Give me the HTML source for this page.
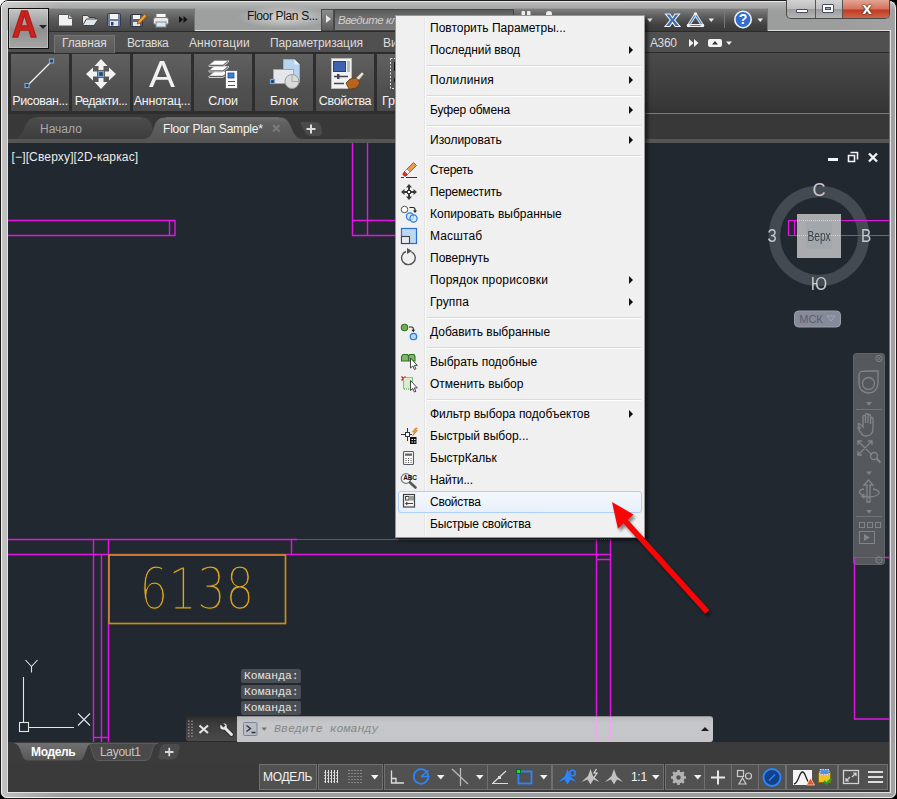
<!DOCTYPE html>
<html lang="ru">
<head>
<meta charset="utf-8">
<title>Floor Plan Sample</title>
<style>
*{box-sizing:border-box;margin:0;padding:0}
html,body{width:897px;height:799px;overflow:hidden;background:#000}
body{font-family:"Liberation Sans",sans-serif;font-size:12px;position:relative}
div,span,svg{position:absolute}
svg{overflow:visible}
#frame{left:0;top:0;width:897px;height:799px;border-radius:8px 8px 7px 7px;
 background:linear-gradient(90deg,#c4c4c4 0,#bcbcbc 8px,#9e9f9f 60px,#9c9d9d 840px,#a2a2a2 100%);
 border:1px solid #1c1c1c}
#frame i{position:absolute;left:0;top:0;right:0;bottom:0;border:1px solid rgba(255,255,255,.8);border-radius:7px 7px 6px 6px}
#app{left:7px;top:30px;width:884px;height:763px;background:#3a3a3a;overflow:hidden;border:1px solid rgba(255,255,255,.85)}
#appin{left:8px;top:31px;width:882px;height:761px;background:#3a3a3a;border-top:1px solid #2a2a2a}
#draw{left:8px;top:143px;width:882px;height:599px;background:#212830;overflow:hidden}
#tabs{left:8px;top:31px;width:882px;height:22px;background:#505050}
.rt{top:35px;height:18px;line-height:17px;color:#dcdcdc;font-size:12px;white-space:nowrap}
#panel{left:8px;top:53px;width:882px;height:61px;background:linear-gradient(#4b4b4b,#343434);border-bottom:1px solid #7a7a7a;border-right:1px solid #6a6a6a}
.rb{top:54px;width:58px;height:57px;background:linear-gradient(#616161,#505050 60%,#4b4b4b);color:#f4f4f4;font-size:12.5px;text-align:center;white-space:nowrap;overflow:hidden}
.rb span{left:0;right:0;top:40px;line-height:14px}
#menu{left:395px;top:15px;width:250px;height:523px;background:#f0f0f0;border:1px solid #979797;box-shadow:3px 3px 3px rgba(0,0,0,.5)}
.mi{left:34px;height:22px;line-height:22px;font-size:12px;color:#000;white-space:nowrap}
.sep{left:31px;width:214px;height:2px;border-top:1px solid #d9d9d9;border-bottom:1px solid #fff}
.arr{left:233px;width:0;height:0;border-left:4px solid #111;border-top:4px solid transparent;border-bottom:4px solid transparent}
.cmdh{left:241px;width:60px;height:14.5px;background:#4b4f54;border-radius:2px;color:#e4e4e4;font-family:'Liberation Mono',monospace;font-size:11.4px;line-height:14.5px;padding-left:3px;white-space:nowrap}
.sg{top:764px;height:26px;border:1px solid #707070;background:#515151}
.hl{left:2px;width:244px;height:22px;border:1px solid #aecff7;border-radius:3px;background:linear-gradient(#f4f8fc,#e8f0fb)}
</style>
</head>
<body>
<div style="left:0;top:0;width:12px;height:12px;background:#fff"></div><div id="frame"><i></i></div>
<div id="app"></div><div id="appin"></div>
<!-- title bar -->
<div style="left:2px;top:2px;width:893px;height:9px;background:linear-gradient(rgba(255,255,255,.28),rgba(255,255,255,0))"></div>
<div id="qat" style="left:48px;top:8px;width:147px;height:23px;background:linear-gradient(#7c7c7c,#5c5c5c 45%,#464646);border-top:1px solid #999;border-right:1px solid #777"></div>
<svg style="left:56px;top:11px" width="136" height="18" viewBox="0 0 136 18">
 <!-- new -->
 <path d="M2.5 3.5h10l4 4v7.5h-14z" fill="#f2f2f2" stroke="#555" stroke-width="1"/>
 <path d="M12.5 3.5v4h4" fill="#d0d0d0" stroke="#666" stroke-width="1"/>
 <!-- open -->
 <path d="M26.5 14.5v-10h5l1.5 2h6v2.5" fill="#e8e8e8" stroke="#444"/>
 <path d="M26.5 14.5l4-6.5h12l-4.5 6.5z" fill="#dfe6ec" stroke="#444"/>
 <!-- save -->
 <rect x="51.500" y="2.500" width="13" height="13" rx="1" fill="#6f7fa0" stroke="#333c55"/>
 <rect x="54" y="3" width="8" height="5" fill="#f4f4f4"/>
 <rect x="54" y="10" width="8" height="5" fill="#e4e4e4"/><rect x="55" y="11" width="2.500" height="3.500" fill="#3a4560"/>
 <!-- saveas -->
 <rect x="74.500" y="3.500" width="12" height="12" rx="1" fill="#5b6477" stroke="#2e3442"/>
 <rect x="77" y="4" width="7" height="4" fill="#f4f4f4"/><rect x="77" y="11" width="7" height="4" fill="#e4e4e4"/>
 <path d="M82 10l6.500-7 2.500 2-6.500 7-3 1z" fill="#f0a030" stroke="#7a4a10" stroke-width=".8"/>
 <!-- print -->
 <rect x="100" y="2.500" width="10" height="5" fill="#fafafa" stroke="#777"/>
 <rect x="97.500" y="6.500" width="15" height="7" rx="2" fill="#e9e9e9" stroke="#777"/>
 <rect x="100" y="11" width="10" height="5" fill="#d8e8f8" stroke="#888"/>
 <!-- more -->
 <path d="M123 5l4 3.500-4 3.500zM127.500 5l4 3.500-4 3.500z" fill="#111"/>
</svg>
<div style="left:238px;top:6px;width:92px;height:22px;background:radial-gradient(ellipse at center,rgba(255,255,255,.6),rgba(255,255,255,0) 72%)"></div>
<div style="left:247px;top:8px;font-size:12px;line-height:16px;color:#141414;white-space:nowrap;letter-spacing:-.35px">Floor Plan S...</div>
<!-- search -->
<div style="left:321px;top:9px;width:13px;height:22px;background:linear-gradient(#8c8c8c,#5c5c5c);border:1px solid #4a4a4a"></div>
<div style="left:326px;top:15px;width:0;height:0;border-left:5px solid #e8e8e8;border-top:4.500px solid transparent;border-bottom:4.500px solid transparent"></div>
<div style="left:334px;top:9px;width:180px;height:22px;background:linear-gradient(#5a5a5a,#747474 50%,#7c7c7c);border:1px solid #444;color:#cfcfcf;font-style:italic;font-size:11.500px;letter-spacing:-.45px;line-height:20px;padding-left:3px;white-space:nowrap;overflow:hidden">Введите ключевое слово/фразу</div>
<div style="left:514px;top:8px;width:254px;height:23px;background:linear-gradient(#7e7e7e,#5c5c5c 35%,#424242 70%,#3a3a3a);border-top:1px solid #999;border-right:1px solid #777"></div>
<svg style="left:518px;top:8px" width="60" height="23" viewBox="518 8 60 23"><rect x="521.500" y="11" width="3.500" height="9" rx="1" fill="#eee"/><rect x="527" y="11" width="3.500" height="9" rx="1" fill="#eee"/><circle cx="549" cy="14" r="3" fill="#eee"/></svg>
<svg style="left:640px;top:8px" width="130" height="23" viewBox="0 0 130 23">
 <path d="M7 10.500h5.500l-2.750 3.500z" fill="#eee"/>
 <path d="M25.500 6h4.500l2.500 3.800 2.500-3.800h4.500l-4.800 6 5.300 6.500h-4.800l-2.700-4-2.700 4h-4.800l5.300-6.500z" fill="#3a6fb5" stroke="#eef2f8" stroke-width="1.100"/>
 <path d="M55.500 6.500l7 11h-14z" fill="none" stroke="#f0f0f0" stroke-width="3" stroke-linejoin="round"/>
 <path d="M55.500 6.500l7 11h-14z" fill="none" stroke="#3f7fd0" stroke-width="1.200" stroke-linejoin="round"/>
 <circle cx="55.500" cy="6" r="1.800" fill="#f0f0f0"/><circle cx="48.500" cy="17.500" r="1.800" fill="#f0f0f0"/><circle cx="62.500" cy="17.500" r="1.800" fill="#f0f0f0"/>
 <path d="M68.500 10.500h5.500l-2.750 3.500z" fill="#eee"/>
 <path d="M84.500 3v17" stroke="#777"/>
 <circle cx="103" cy="11.500" r="8.200" fill="#2f6fd0" stroke="#f4f4f4" stroke-width="1.600"/>
 <path d="M117.500 10.500h5.500l-2.750 3.500z" fill="#eee"/>
</svg>
<div style="left:737px;top:11px;width:12px;text-align:center;font-size:14px;line-height:17px;font-weight:bold;color:#fff">?</div>
<!-- window buttons -->
<div style="left:786px;top:0;width:104px;height:19px;border:1px solid #4a4a4a;border-top:none;border-radius:0 0 5px 5px;overflow:hidden;background:linear-gradient(#d2d2d2,#bdbdbd 48%,#9c9c9c 52%,#b5b5b5)">
 <div style="left:28px;top:0;width:1px;height:19px;background:#555"></div>
 <div style="left:55px;top:0;width:1px;height:19px;background:#555"></div>
 <div style="left:56px;top:0;width:48px;height:19px;background:linear-gradient(#e3a595,#d5705b 48%,#c03a22 52%,#cf6a4e)"></div>
 <div style="left:9px;top:9px;width:12px;height:4px;background:#fff;border:1px solid #444a66;border-radius:1px"></div>
 <div style="left:35px;top:4px;width:12px;height:9px;background:#fff;border:1px solid #444a66;border-radius:1px"></div>
 <div style="left:38px;top:7px;width:6px;height:3px;background:#aaa;border:1px solid #444a66"></div>
 <div style="left:71px;top:-1px;width:18px;font-size:17px;line-height:19px;font-weight:bold;color:#fff;text-shadow:0 0 1px #333,0 0 1px #333,0 0 2px #333;text-align:center">x</div>
</div>
<!-- ribbon tabs -->
<div id="tabs" style="border-top:1px solid #2b2b2b;border-bottom:1px solid #2b2b2b"></div>
<div style="left:54px;top:35px;width:61px;height:18px;background:linear-gradient(#666,#5a5a5a);border:1px solid #757575;border-bottom:none"></div>
<div class="rt" style="left:62px;letter-spacing:-.15px">Главная</div>
<div class="rt" style="left:127px;letter-spacing:-.5px">Вставка</div>
<div class="rt" style="left:189px;letter-spacing:.1px">Аннотации</div>
<div class="rt" style="left:270px;letter-spacing:-.1px">Параметризация</div>
<div class="rt" style="left:383px">Вид</div>
<div class="rt" style="left:650px;letter-spacing:-.4px">A360</div>
<svg style="left:686px;top:36px" width="50" height="14" viewBox="0 0 50 14">
 <path d="M3 3l4.500 4-4.500 4zM8 3l4.500 4-4.500 4z" fill="#f4f4f4"/>
 <rect x="22" y="3" width="14" height="8" rx="2" fill="#f4f4f4"/><path d="M26 8.500h6l-3-3.500z" fill="#333"/>
 <path d="M40 5.500h6l-3 3.500z" fill="#f0f0f0"/>
</svg>
<div id="appbtn" style="left:8px;top:8px;width:41px;height:41px;background:linear-gradient(#c6c6c6,#909090 55%,#a6a6a6);border:1px solid #111;box-shadow:inset 0 0 0 1px rgba(255,255,255,.25)"></div>
<div style="left:12px;top:5px;width:30px;height:38px;font-size:37.500px;line-height:38px;font-weight:bold;color:#c8231f;-webkit-text-stroke:1.300px #b81c18;text-shadow:0 0 1px #7a0e0c;transform:scaleX(.92);transform-origin:0 0">A</div>
<div style="left:39px;top:25px;border-top:4px solid #1e2430;border-left:4px solid transparent;border-right:4px solid transparent;width:0;height:0"></div>
<!-- ribbon panel -->
<div id="panel"></div>
<div style="left:8px;top:53px;width:440px;height:61px;background:#2e2e2e"></div>
<div class="rb" style="left:11px"><span style="letter-spacing:-.4px">Рисован...</span></div>
<div class="rb" style="left:72px"><span style="letter-spacing:-.5px">Редакти...</span></div>
<div class="rb" style="left:133px"><span style="letter-spacing:-.25px">Аннотац...</span></div>
<div class="rb" style="left:194px"><span style="letter-spacing:-.2px">Слои</span></div>
<div class="rb" style="left:255px"><span>Блок</span></div>
<div class="rb" style="left:316px"><span style="letter-spacing:-.3px">Свойства</span></div>
<div class="rb" style="left:377px"><span style="text-align:left;left:5px">Группы</span></div>
<svg style="left:10px;top:54px" width="385" height="40" viewBox="0 0 385 40">
 <!-- draw: line -->
 <path d="M17.500 31.500l24-24" stroke="#f0f0f0" stroke-width="1.300"/>
 <rect x="15" y="29.500" width="4" height="4" fill="#3a3a3a" stroke="#6aa7f0" stroke-width="1.200"/>
 <rect x="39.500" y="5" width="4" height="4" fill="#3a3a3a" stroke="#6aa7f0" stroke-width="1.200"/>
 <!-- modify: move arrows -->
 <g transform="translate(91,20)" fill="#f2f2f2">
  <path d="M0 -15l6.500 7h-4v4h-5v-4h-4z"/>
  <path d="M0 15l6.500-7h-4v-4h-5v4h-4z"/>
  <path d="M-15 0l7-6.500v4h4v5h-4v4z"/>
  <path d="M15 0l-7-6.500v4h-4v5h4v4z"/>
  <rect x="-2.500" y="-2.500" width="5" height="5" fill="#444" stroke="#6aa7f0" stroke-width="1.300"/>
 </g>
 <!-- layers -->
 <g transform="translate(184,0)">
  <path d="M15 22l5.500-4.500h14l-5.500 4.500z" fill="#fff" stroke="#777" stroke-width=".6"/>
  <path d="M15 16.500l5.500-4.500h14l-5.500 4.500z" fill="#fff" stroke="#777" stroke-width=".6"/>
  <path d="M15 11l5.500-4.500h14l-5.500 4.500z" fill="#fff" stroke="#777" stroke-width=".6"/>
  <path d="M15 11v1.500l14 0 5.500-4.500v-1.500M15 16.500v1.500h14l5.500-4.500v-1.500M15 22v1.500h14l5.500-4.500v-1.500" fill="none" stroke="#ccc" stroke-width="1"/>
  <rect x="31.500" y="16.500" width="12" height="18" fill="#fafafa" stroke="#666"/>
  <rect x="34" y="19" width="6" height="5" fill="#3e7fd0" stroke="#1f4f9a" stroke-width=".8"/>
  <path d="M34 27.500h7M34 31.500h7" stroke="#555" stroke-width="1"/>
 </g>
 <!-- block -->
 <g transform="translate(245,0)">
  <path d="M28.500 5.500h11l5 5v18h-16z" fill="#b7d4ee" stroke="#8fb3d6"/>
  <path d="M39.500 5.500v5h5z" fill="#e6f0fa"/>
  <rect x="18.500" y="15.500" width="20" height="14" fill="#e4e6ea" stroke="#9aa"/>
  <circle cx="37" cy="27.500" r="7" fill="#d8dadc" stroke="#999"/>
  <path d="M37 20.500v7h7" stroke="#aaa" fill="none"/>
  <rect x="15.500" y="25.500" width="4" height="4" fill="#3a3a3a" stroke="#6aa7f0" stroke-width="1.200"/>
 </g>
 <!-- properties -->
 <g transform="translate(306,0)">
  <rect x="15.500" y="4.500" width="20" height="30" fill="#f2f2f2" stroke="#bbb"/>
  <rect x="17.500" y="7.500" width="12" height="10" fill="#3d62b0" stroke="#24407e"/>
  <rect x="31" y="7" width="3" height="11" fill="#bbb"/>
  <path d="M18 22.500h14M18 29.500h10" stroke="#445" stroke-width="1.300"/>
  <rect x="21" y="20" width="2.500" height="5" fill="#445"/>
  <path d="M30 29l4-4 7-1 3 5-4 5-7 1z" fill="#b5651d" stroke="#6b3a10" stroke-width=".8"/>
  <path d="M40 24l6-6 2 2-5 6z" fill="#e8e0d0" stroke="#666" stroke-width=".6"/>
 </g>
 <!-- groups -->
 <g transform="translate(368,0)">
  <rect x="12.500" y="4.500" width="20" height="30" fill="none" stroke="#ddd" stroke-dasharray="2 1.500"/>
  <rect x="16" y="8" width="12" height="9" fill="#111"/><circle cx="21" cy="26" r="5" fill="#111"/>
 </g>
</svg>
<div style="left:145px;top:57px;width:34px;font-size:36px;line-height:36px;color:#f2f2f2;text-align:center;transform:scaleX(1.080)">A</div>
<!-- strip under ribbon + file tabs -->
<div style="left:8px;top:114px;width:882px;height:29px;background:#383838"></div>
<div style="left:8px;top:139px;width:882px;height:4px;background:#555"></div>
<svg style="left:8px;top:114px" width="340" height="29" viewBox="8 114 340 29">
 <defs><linearGradient id="tg1" x1="0" y1="0" x2="0" y2="1"><stop offset="0" stop-color="#4c4c4c"/><stop offset="1" stop-color="#3d3d3d"/></linearGradient>
 <linearGradient id="tg2" x1="0" y1="0" x2="0" y2="1"><stop offset="0" stop-color="#6c6c6c"/><stop offset=".25" stop-color="#606060"/><stop offset="1" stop-color="#555"/></linearGradient></defs>
 <path d="M9 139c11 0 13-5 16-12s5-9.500 12-9.500h104c7 0 9 2.500 11 8.500s4 13 14 13z" fill="url(#tg1)"/>
 <path d="M37 118h104" stroke="#5a5a5a" stroke-width="1"/>
 <path d="M140 139.500c10 0 12-5 14-12s5-10 12-10h113c7 0 9 2.500 12 9.500s5 12.500 14 12.500z" fill="url(#tg2)"/>
 <path d="M166 118h113" stroke="#7c7c7c" stroke-width="1"/>
 <path d="M300 122h14c5 0 7 3 7.500 7l.5 3c0 3-1 4-4 4h-6c-5 0-7-3-9-8z" fill="#4b4b4b"/>
 <path d="M306.500 129h9M311 124.500v9" stroke="#dcdcdc" stroke-width="2"/>
 <path d="M273 125l6.500 6.500M279.500 125l-6.500 6.500" stroke="#7a7a7a" stroke-width="2"/>
</svg>
<div style="left:40px;top:122px;font-size:12px;line-height:15px;color:#aaa">Начало</div>
<div style="left:163px;top:122px;font-size:12px;line-height:15px;color:#f4f4f4;white-space:nowrap;letter-spacing:-.2px">Floor Plan Sample*</div>
<div id="draw">
<svg style="left:0;top:0" width="882" height="599" viewBox="8 143 882 599">
 <g stroke="#e414e4" stroke-width="1.400" fill="none">
  <path d="M352.500 143v92.500h43M367.500 143v92.500M352.500 220.500h43"/>
  <path d="M8 220.500h167v15h-167M169.500 220.500v15"/>
  <path d="M8 539.500h289M8 554.500h603"/>
  <path d="M93.500 539.500v203M101.500 554.500v188M108.500 539.500v203M93.500 737.500h15"/>
  <path d="M291.500 539.500v15"/>
  <path d="M596.500 539.500v203M610.500 539.500v203M596.500 559.500h14"/>
  <path d="M890 557.500h-35.500v161.500h35.500"/>
 </g>
 <path d="M297 539.500h299" stroke="#5a5f66"/>
 <path d="M596 539.500h15" stroke="#e01fe0" stroke-dasharray="1 1"/>
 <rect x="109" y="555" width="176.500" height="68.500" fill="none" stroke="#c98d1c" stroke-width="1.700"/>
</svg>
<svg style="left:0;top:0" width="882" height="599" viewBox="8 143 882 599">
 <text transform="translate(139.500 608.800) scale(.785 1)" font-family="'DejaVu Sans Light','DejaVu Sans',sans-serif" font-weight="200" font-size="57.500" fill="#dba51c" stroke="#212830" stroke-width="1">6138</text>
 <!-- UCS icon -->
 <g stroke="#e6e6e6" stroke-width="1.100" fill="none">
  <path d="M23.500 722v-45M29 727.500h45"/>
  <rect x="19.500" y="722.500" width="9" height="9"/>
  <path d="M25.500 660l6 6.500 6-6.500M31.500 666.500v6"/>
  <path d="M78 713.500l12 12M90 713.500l-12 12"/>
 </g>
</svg>
<div style="left:3.500px;top:7px;font-size:12px;line-height:14px;color:#ececec;white-space:nowrap;letter-spacing:.15px">[−][Сверху][2D-каркас]</div>
</div>
<!-- drawing window controls -->
<svg style="left:826px;top:150px" width="56" height="16" viewBox="0 0 56 16">
 <rect x="2" y="8" width="10" height="3" fill="#f4f4f4"/>
 <path d="M24.500 2.500h7v7M22.500 5.500h6v6h-6z" fill="none" stroke="#f4f4f4" stroke-width="1.600"/>
 <path d="M43 3.500l8 8M51 3.500l-8 8" stroke="#f4f4f4" stroke-width="2.400"/>
</svg>
<!-- viewcube -->
<svg style="left:760px;top:176px" width="130" height="160" viewBox="760 176 130 160">
 <circle cx="819" cy="236" r="44.500" fill="none" stroke="#444a52" stroke-width="11.500"/>
 <path d="M788.500 220.500h101.500M788.500 235.500h101.500M788.500 220.500v15M794.500 220.500v15" stroke="#e414e4" stroke-width="1.200" fill="none"/>
 <rect x="797" y="214" width="44" height="44" fill="#a9abae"/>
 <rect x="806" y="222" width="26" height="27" fill="#a2a7ab"/>
 <path d="M797 220.500h44M797 235.500h44" stroke="#d6d0d8" stroke-dasharray="1 1" fill="none" shape-rendering="crispEdges"/>
 <rect x="794.500" y="311" width="46" height="16" rx="4" fill="#878b99" stroke="#9a9eac" stroke-width="1"/>
 <path d="M827 316h8l-4 5z" fill="none" stroke="#a4a8b6" stroke-width=".9"/>
</svg>
<div style="left:809px;top:179px;width:20px;text-align:center;font-size:18px;line-height:22px;color:#c9c9c9">С</div>
<div style="left:809px;top:273px;width:20px;text-align:center;font-size:18px;line-height:22px;color:#c9c9c9;transform:scaleX(.9)">Ю</div>
<div style="left:762px;top:225px;width:20px;text-align:center;font-size:18px;line-height:22px;color:#c9c9c9;transform:scaleX(.85)">З</div>
<div style="left:856px;top:225px;width:20px;text-align:center;font-size:18px;line-height:22px;color:#c9c9c9;transform:scaleX(.85)">В</div>
<div style="left:799px;top:227px;width:40px;text-align:center;font-size:15.500px;line-height:17px;color:#3e4248;transform:scaleX(.66)">Верх</div>
<div style="left:797px;top:312px;width:28px;text-align:center;font-size:11px;line-height:14px;color:#5a5e6b">МСК</div>
<!-- nav bar -->
<div style="left:853px;top:353px;width:32px;height:212px;border-radius:4px;background:rgba(88,92,96,.94);border:1px solid rgba(110,114,118,.5)"></div>
<svg style="left:853px;top:353px" width="32" height="212" viewBox="853 353 32 212" fill="none" stroke="#80858a" stroke-width="1.300">
 <path d="M854.500 565v-7.500h31" stroke="#c030c8" stroke-width="1" shape-rendering="crispEdges"/>
 <circle cx="879" cy="358.500" r="3.200" stroke-width="1"/><path d="M877.500 357l3 3M880.500 357l-3 3" stroke-width=".9"/>
 <circle cx="879" cy="560" r="3.200" stroke-width="1"/><path d="M877.500 559l1.500 1.500 1.500-1.500" stroke-width=".9"/>
 <path d="M859 375c0-4 2-4 10-4h9v12c0 6-4 10-9.500 10s-9.500-4-9.500-9.500z"/>
 <circle cx="868.500" cy="383.500" r="6"/>
 <path d="M866 402h6l-3 3.500z" fill="#80858a" stroke="none"/>
 <path d="M856 409.500h26M856 516.500h26" stroke="#70747a" stroke-width="1"/>
 <path d="M860 428c-3-4-2-5 0-4l3 3v-10c0-2 2.500-2 2.500 0v6-8c0-2 2.500-2 2.500 0v8-7c0-2 2.500-2 2.500 0v8-5c0-2 2.500-2 2.500 0v9c0 6-3 8-7 8s-5-3-8-8z"/>
 <path d="M858 441l14 14M872 441l-14 14M858 445v-4h4M872 445v-4h-4M858 451v4h4" />
 <circle cx="874" cy="456" r="3.500"/><path d="M876.500 458.500l4 4" stroke-width="2"/>
 <path d="M866 471.500h6l-3 3.500z" fill="#80858a" stroke="none"/>
 <path d="M867 502v-17h-3l4.500-5 4.500 5h-3v17z"/>
 <path d="M864 489c-6 1-6 5 0 6.500M873 489c9 1.500 8 7-3 8l-8-1 2.500-2M862 496l2.500 2.500"/>
 <path d="M866 510h6l-3 3.500z" fill="#80858a" stroke="none"/>
 <rect x="859.500" y="522.500" width="5" height="5" stroke-width="1"/><rect x="867.500" y="522.500" width="5" height="5" stroke-width="1"/><rect x="875.500" y="522.500" width="5" height="5" stroke-width="1"/>
 <rect x="859.500" y="531.500" width="15" height="12" stroke-width="1"/><path d="M864 534l6 3.500-6 3.500z" fill="#80858a" stroke="none"/>
</svg>
<!-- command history -->
<div class="cmdh" style="top:668.500px">Команда:</div>
<div class="cmdh" style="top:684.500px">Команда:</div>
<div class="cmdh" style="top:700.500px">Команда:</div>
<!-- command line -->
<div style="left:185px;top:716px;width:53px;height:26px;background:linear-gradient(#2e2e2e,#3c3c3c 30%,#4a4a4a);border-radius:3px 0 0 3px;border:1px solid #2a2a2a;border-right:none"></div>
<div style="left:237px;top:716px;width:476px;height:26px;background:linear-gradient(#b8babc,#c5c7ca 25%,#c3c5c8);border-top:1px solid #909294;border-radius:0 3px 3px 0"></div>
<svg style="left:185px;top:716px" width="90" height="26" viewBox="185 716 90 26">
 <path d="M188.750 720.500v16.500M192 720.500v16.500" stroke="#8a8a8a" stroke-width="1.500" stroke-dasharray="1.500 1.500"/>
 <path d="M199.500 725.500l8.500 7.500M208 725.500l-8.500 7.500" stroke="#e4e4e4" stroke-width="2.100"/>
 <path d="M225 728l6.500 6.500" stroke="#2a2a2a" stroke-width="4.600" stroke-linecap="round"/>
 <circle cx="223.500" cy="726.500" r="4" fill="#2a2a2a"/>
 <path d="M225 728l6.500 6.500" stroke="#e6e6e6" stroke-width="3" stroke-linecap="round"/>
 <circle cx="223.500" cy="726.500" r="3.300" fill="#e6e6e6"/>
 <path d="M220 720l5.500 5.500-2 2-5.500-5.500z" fill="#363636"/>
 <rect x="243.500" y="722.500" width="13.500" height="13" rx="1" fill="#b9bdc6" stroke="#7d8496"/>
 <path d="M246.500 725.500l4 3-4 3M251.500 732.500h4" stroke="#2a2e38" stroke-width="1.300" fill="none"/>
 <path d="M261.500 727.500h5.500l-2.750 3.200z" fill="#707070"/>
</svg>
<div style="left:274px;top:721px;font-family:'Liberation Mono',monospace;font-style:italic;font-size:11.600px;line-height:15px;color:#868686;white-space:nowrap">Введите команду</div>
<div style="left:701px;top:727px;width:0;height:0;border-bottom:4.500px solid #1c1c1c;border-left:4px solid transparent;border-right:4px solid transparent"></div>
<svg style="left:590px;top:716px" width="30" height="27" viewBox="590 716 30 27"><path d="M596.500 717v25M610.500 717v25M596.500 741.500h14" stroke="#f2a6f2" stroke-width="1.200" fill="none"/><path d="M596.500 737.500h14" stroke="#f2a6f2" stroke-width="1" stroke-dasharray="1 1" fill="none"/></svg>
<!-- layout tabs -->
<div style="left:8px;top:742px;width:882px;height:22px;background:#3b3b3b"></div>
<svg style="left:8px;top:742px" width="200" height="20" viewBox="8 742 200 20">
 <defs><linearGradient id="lg1" x1="0" y1="0" x2="0" y2="1"><stop offset="0" stop-color="#707070"/><stop offset="1" stop-color="#575757"/></linearGradient></defs>
 <path d="M86 743.500c3 0 4 1.500 5 4.500l2.500 8c1 3 2.500 4.500 5.500 4.500h46c3 0 4.500-1.500 5.500-4.500l2.500-8c1-3 2-4.500 5-4.500z" fill="#4a4a4a" stroke="#5c5c5c"/>
 <path d="M12 743c4 0 6 1.500 7.500 5l3 8c1.500 3.500 3 4.500 6 4.500h50c3 0 4.500-1.500 5.500-4.500l3-8c1.500-3.500 3-5 6-5z" fill="url(#lg1)"/>
 <path d="M166 744h11c2 0 3 1 2.500 3.500l-1.500 7c-1 3.500-3 5-6 5h-11c-2 0-3-1-2.500-3.500l1.500-7c1-3.500 3-5 6-5z" fill="#4b4b4b"/>
 <path d="M165 752h8.500M169.250 747.750v8.500" stroke="#d8d8d8" stroke-width="1.800"/>
</svg>
<div style="left:31px;top:745px;font-size:12px;line-height:15px;font-weight:bold;color:#fff;white-space:nowrap;letter-spacing:-.35px">Модель</div>
<div style="left:100px;top:745px;font-size:12px;line-height:15px;color:#c4c4c4;white-space:nowrap;letter-spacing:-.3px">Layout1</div>
<!-- status bar -->
<div style="left:8px;top:763px;width:882px;height:29px;background:#3a3a3a"></div>
<div class="sg" style="left:259px;width:58px"></div>
<div class="sg" style="left:318px;width:65px"></div>
<div class="sg" style="left:384px;width:104px"></div>
<div class="sg" style="left:487px;width:65px"></div>
<div class="sg" style="left:552px;width:112px"></div>
<div class="sg" style="left:665px;width:40px"></div>
<div class="sg" style="left:704px;width:28px"></div>
<div class="sg" style="left:731px;width:28px"></div>
<div class="sg" style="left:758px;width:28px"></div>
<div class="sg" style="left:786px;width:52px"></div>
<div class="sg" style="left:838px;width:50px"></div>
<div style="left:263px;top:770px;font-size:12px;line-height:15px;color:#f4f4f4;letter-spacing:-.3px">МОДЕЛЬ</div>
<div style="left:631px;top:770px;font-size:12px;line-height:15px;color:#f4f4f4;letter-spacing:-.3px">1:1</div>
<svg style="left:318px;top:764px" width="571" height="26" viewBox="318 764 571 26" fill="none">
 <!-- grid -->
 <path d="M325.500 770v13M328.500 770v13M331.500 770v13M334.500 770v13M337.500 770v13" stroke="#e0e0e0" stroke-width="1"/>
 <path d="M324 772.500h15M324 775.500h15M324 778.500h15M324 781.500h15" stroke="#bbb" stroke-width="1" stroke-dasharray="1 2"/>
 <!-- snap dots -->
 <path d="M348.500 770.500h14M348.500 773.500h14M348.500 776.500h14M348.500 779.500h14M348.500 782.500h14" stroke="#bdbdbd" stroke-width="1" stroke-dasharray="1 2"/>
 <path d="M371 775h7.500l-3.750 4.500z" fill="#f2f2f2"/>
 <!-- ortho -->
 <path d="M391.500 770.500v12.500h12.500M391.500 778.500h4.500v4.500" stroke="#ddd" stroke-width="1.300"/>
 <!-- polar -->
 <circle cx="421" cy="776.500" r="7.300" stroke="#2a86ff" stroke-width="1.800"/>
 <path d="M421 776.500h8.500M421 776.500l7.500-6" stroke="#2a86ff" stroke-width="1.500"/>
 <path d="M437 775h7.500l-3.750 4.500z" fill="#f2f2f2"/>
 <!-- isodraft -->
 <path d="M460.500 768v18M452 769l16 15" stroke="#b8b8b8" stroke-width="1.300"/>
 <path d="M476 775h7.500l-3.750 4.500z" fill="#f2f2f2"/>
 <!-- otrack -->
 <path d="M492 783.500h16M493 783l13-12" stroke="#ddd" stroke-width="1.200"/>
 <rect x="498" y="776" width="3" height="3" fill="#ddd"/>
 <!-- osnap -->
 <rect x="518.500" y="771.500" width="13" height="12" stroke="#2a86ff" stroke-width="1.800"/>
 <rect x="516.500" y="769.500" width="4" height="4" fill="#20e020" stroke="#063"/>
 <path d="M540 775h7.500l-3.750 4.500z" fill="#f2f2f2"/>
 <!-- annotation icons -->
 <g transform="translate(567.500 777)">
  <path d="M0 -8l2.500 7 6.500 6-6-2.500-3 5-3-5-6 2.500 6.500-6z" fill="#2a86ff"/>
  <circle cx="5" cy="-4" r="2.800" stroke="#2a86ff" stroke-width="1.600"/>
 </g>
 <g transform="translate(590.500 777)">
  <path d="M0 -8l2.500 7 6.500 6-6-2.500-3 5-3-5-6 2.500 6.500-6z" fill="#c2c2c2"/>
  <path d="M6 -8l-2.500 4h3l-3 4.500" stroke="#ddd" stroke-width="1.200"/>
 </g>
 <g transform="translate(614 777)">
  <path d="M0 -8l2.500 7 6.500 6-6-2.500-3 5-3-5-6 2.500 6.500-6z" fill="#c2c2c2"/>
 </g>
 <path d="M652 775h7.500l-3.750 4.500z" fill="#f2f2f2"/>
 <!-- gear -->
 <g transform="translate(678.500 777.500)">
  <circle r="4.500" stroke="#b4b4b4" stroke-width="3"/>
  <path d="M0 -7.500v15M-7.500 0h15M-5.300 -5.300l10.600 10.600M5.300 -5.300l-10.600 10.600" stroke="#b4b4b4" stroke-width="2.600"/>
  <circle r="2.200" fill="#515151"/>
 </g>
 <path d="M694 775h7.500l-3.750 4.500z" fill="#f2f2f2"/>
 <!-- plus -->
 <path d="M711 777.500h14M718 770.500v14" stroke="#e8e8e8" stroke-width="2"/>
 <!-- shapes -->
 <rect x="737.500" y="770.500" width="6" height="6" stroke="#ccc" stroke-width="1.200"/>
 <circle cx="748.500" cy="776" r="3" stroke="#ccc" stroke-width="1.200"/>
 <path d="M742.500 778l3.500 6h-7z" stroke="#ccc" stroke-width="1.200"/>
 <!-- blue circle -->
 <circle cx="772" cy="777.500" r="8.500" fill="#15408a" stroke="#2a86ff" stroke-width="1.800"/>
 <path d="M769 780.500l6-6" stroke="#2a86ff" stroke-width="1.500"/>
 <!-- graph -->
 <rect x="793" y="770" width="19" height="15" fill="#f4f4f4"/>
 <path d="M794 784c5-1 5-12 8.500-12s3.500 11 8.500 12" stroke="#222" stroke-width="1.300"/>
 <path d="M810.500 778l4 7h-8z" fill="#e8541c" stroke="#fff" stroke-width=".6"/>
 <!-- yellow -->
 <rect x="818.500" y="772.500" width="12" height="10" fill="#f0c420" stroke="#8a6a10"/>
 <rect x="820" y="769.500" width="9" height="5" fill="#5a8fd8" stroke="#dde" stroke-dasharray="1.500 1"/>
 <path d="M824 781l2.500 2.500 5-5" stroke="#2aa02a" stroke-width="2"/>
 <!-- expand -->
 <rect x="843.500" y="770.500" width="15" height="13" stroke="#d4d4d4" stroke-width="1.300"/>
 <path d="M846 781l4-4M846 778v3h3M856 773l-4 4M856 776v-3h-3" stroke="#d4d4d4" stroke-width="1.200"/>
 <!-- hamburger -->
 <path d="M868 772h15M868 777h15M868 782h15" stroke="#dcdcdc" stroke-width="2"/>
</svg>
<div style="left:889px;top:31px;width:1px;height:761px;background:#707070"></div>
<div id="menu">
<div style="left:28px;top:2px;width:1px;height:517px;background:#e4e4e4"></div><div style="left:29px;top:2px;width:1px;height:517px;background:#fafafa"></div>
<div class="mi" style="top:1px">Повторить Параметры...</div>
<div class="mi" style="top:23px;letter-spacing:-0.08px">Последний ввод</div>
<div class="arr" style="top:30px"></div>
<div class="sep" style="top:49px"></div>
<div class="mi" style="top:53px;letter-spacing:0.19px">Полилиния</div>
<div class="arr" style="top:60px"></div>
<div class="sep" style="top:79px"></div>
<div class="mi" style="top:83px;letter-spacing:-0.12px">Буфер обмена</div>
<div class="arr" style="top:90px"></div>
<div class="sep" style="top:109px"></div>
<div class="mi" style="top:113px">Изолировать</div>
<div class="arr" style="top:120px"></div>
<div class="sep" style="top:139px"></div>
<div class="mi" style="top:143px;letter-spacing:-0.34px">Стереть</div>
<div class="mi" style="top:165px;letter-spacing:-0.14px">Переместить</div>
<div class="mi" style="top:187px">Копировать выбранные</div>
<div class="mi" style="top:209px;letter-spacing:0.15px">Масштаб</div>
<div class="mi" style="top:231px">Повернуть</div>
<div class="mi" style="top:253px;letter-spacing:0.17px">Порядок прорисовки</div>
<div class="arr" style="top:260px"></div>
<div class="mi" style="top:275px;letter-spacing:0.17px">Группа</div>
<div class="arr" style="top:282px"></div>
<div class="sep" style="top:301px"></div>
<div class="mi" style="top:305px">Добавить выбранные</div>
<div class="sep" style="top:331px"></div>
<div class="mi" style="top:335px">Выбрать подобные</div>
<div class="mi" style="top:357px">Отменить выбор</div>
<div class="sep" style="top:383px"></div>
<div class="mi" style="top:387px">Фильтр выбора подобъектов</div>
<div class="arr" style="top:394px"></div>
<div class="mi" style="top:409px">Быстрый выбор...</div>
<div class="mi" style="top:431px">БыстрКальк</div>
<div class="mi" style="top:453px;letter-spacing:-0.17px">Найти...</div>
<div class="hl" style="top:475px"></div>
<div class="mi" style="top:475px;letter-spacing:-0.26px">Свойства</div>
<div class="mi" style="top:497px;letter-spacing:-0.16px">Быстрые свойства</div>
<svg style="left:0;top:0" width="34" height="520" viewBox="396 16 34 520" fill="none">
 <!-- erase -->
 <path d="M401 177.500h3M406 177.500h11" stroke="#333" stroke-width="1"/>
 <path d="M413.500 162.500l3 3-9.500 9.500-3-3z" fill="#e89a50" stroke="#8a4a18" stroke-width=".8"/>
 <path d="M407 169l3 3-3 3-3-3z" fill="#f4f4f4" stroke="#777" stroke-width=".6"/>
 <path d="M404.500 171.500l3 3-1.500 1.500c-1.500 1-3.500-1-3-2.500z" fill="#d8381c" stroke="#8a1a0c" stroke-width=".6"/>
 <!-- move -->
 <g transform="translate(409 192)" fill="#3c3c3c">
  <path d="M0 -8l3 3.500h-2v2.500h-2v-2.500h-2zM0 8l3-3.500h-2v-2.500h-2v2.500h-2zM-8 0l3.500-3v2h2.500v2h-2.500v2zM8 0l-3.500-3v2h-2.500v2h2.500v2z"/>
  <rect x="-1.500" y="-1.500" width="3" height="3" fill="#fff" stroke="#3c3c3c" stroke-width="1"/>
 </g>
 <!-- copy -->
 <circle cx="404.500" cy="209.500" r="3.300" fill="#fdfdfd" stroke="#555" stroke-width="1"/>
 <path d="M409.500 207.500h3.500c1.500 0 2 .5 2 2v1.500" stroke="#222" stroke-width="1.200"/><path d="M413 210.500h4l-2 2.500z" fill="#222"/>
 <circle cx="410" cy="216.500" r="3.600" fill="#cfe4f8" stroke="#2a7fd8" stroke-width="1.200"/>
 <circle cx="413.500" cy="218.500" r="3.600" fill="#cfe4f8" fill-opacity=".7" stroke="#2a7fd8" stroke-width="1.200"/>
 <!-- scale -->
 <rect x="401.500" y="228.500" width="15" height="15" fill="#bcd9f2" stroke="#2a6fc8" stroke-width="1.200"/>
 <rect x="401.500" y="236.500" width="8" height="7" fill="#e8eaee" stroke="#444" stroke-width="1.100"/>
 <!-- rotate -->
 <path d="M411.500 251.800a6.800 6.800 0 1 1-5.500-.3" stroke="#555" stroke-width="1.400"/>
 <path d="M407 248l5 3-5 3z" fill="#555"/>
 <!-- add selected -->
 <circle cx="404.500" cy="327.500" r="3.200" fill="#7da85a" stroke="#2a7a1a" stroke-width="1.100"/>
 <path d="M409 327h2.500c1.200 0 1.800.6 1.800 1.800v1.200" stroke="#222" stroke-width="1.100"/><path d="M411.500 329.800h3.600l-1.800 2.400z" fill="#222"/>
 <circle cx="413.500" cy="336.500" r="3.200" fill="#b4d6f2" stroke="#2a7fd8" stroke-width="1.300"/>
 <!-- select similar -->
 <path d="M401.500 356.500l1.500-2h4.500l1 2v4.500h-7zM408.500 356.500l1-2h4.500l1 2v4.500h-6.500z" fill="#8ab070" stroke="#2a7a1a" stroke-width="1.100"/>
 <path d="M410.500 358v10l2.300-2 1.600 3.500 1.500-.7-1.600-3.400h3z" fill="#fff" stroke="#333" stroke-width=".9"/>
 <!-- deselect -->
 <path d="M401.500 376.500l4 4M405.500 376.500l-4 4" stroke="#d02020" stroke-width="1.400"/>
 <rect x="403.500" y="377.500" width="9" height="11.500" fill="#d8ecd0" stroke="#2a9a2a" stroke-width="1.100" stroke-dasharray="1 1"/>
 <path d="M410.500 380.500v10l2.300-2 1.600 3.500 1.500-.7-1.600-3.400h3z" fill="#fff" stroke="#333" stroke-width=".9"/>
 <!-- quick select -->
 <path d="M401 434.500h5M410 434.500h2M407.500 428v4.500M407.500 436.500v4.500" stroke="#333" stroke-width="1"/>
 <rect x="405.500" y="432.500" width="4" height="4" fill="#fff" stroke="#333" stroke-width="1"/>
 <path d="M415.500 428l-3 4h2l-2 4 5-5.500h-2.200l2-2.500z" fill="#f0a020" stroke="#d06010" stroke-width=".5"/>
 <rect x="410" y="437" width="6.500" height="7" fill="#111"/><path d="M411.500 439.500h1.500M414 439.500h1.500M411.500 442h1.500M414 442h1.500" stroke="#fff" stroke-width="1"/>
 <!-- calc -->
 <rect x="403.500" y="451.500" width="10" height="13" rx="1" fill="#f8f8f8" stroke="#555a66" stroke-width="1.100"/>
 <rect x="405" y="453.500" width="7" height="2.300" fill="#666"/>
 <path d="M405.500 458.500h7M405.500 460.500h7M405.500 462.500h7" stroke="#555" stroke-width="1" stroke-dasharray="1 1.500"/>
 <!-- find -->
 <circle cx="406" cy="478.500" r="4.800" fill="#f6f8fa" stroke="#777" stroke-width="1.200"/>
 <path d="M410 482.500l5.500 5" stroke="#555" stroke-width="2.600" stroke-linecap="round"/>
 <text x="403.300" y="480.300" font-family="'Liberation Sans',sans-serif" font-size="6.500" font-weight="bold" fill="#111" letter-spacing="-.2">ABC</text>
</svg>
<svg style="left:0;top:474.400px" width="34" height="24" viewBox="396 491 34 24" fill="none" id="picon">
 <rect x="403.500" y="495.500" width="11" height="12.500" fill="#f4f4f4" stroke="#444" stroke-width="1.200"/>
 <rect x="405.500" y="497.500" width="3.500" height="3.500" stroke="#444" stroke-width="1"/>
 <path d="M411 497v4.500M413 497v4.500" stroke="#444" stroke-width="1"/>
 <path d="M406 504.500h7M405.500 504.500l1.500-1.200v2.400z" stroke="#444" stroke-width="1"/>
</svg>
</div>
<svg style="left:600px;top:495px" width="120" height="125" viewBox="600 495 120 125">
 <defs><filter id="ash" x="-20%" y="-20%" width="140%" height="140%"><feGaussianBlur stdDeviation="1.600"/></filter></defs>
 <g transform="translate(2 3)" opacity=".45" filter="url(#ash)"><path d="M612 502l21.500 12.500-5.700 5.200 81.500 90.300-4.200 3.800-81.500-90.300-5.700 5.200z" fill="#000"/></g>
 <path d="M612 502l21.500 12.500-5.700 5.200 81.500 90.300-4.200 3.800-81.500-90.300-5.700 5.200z" fill="#f80606"/>
</svg>
</body>
</html>
